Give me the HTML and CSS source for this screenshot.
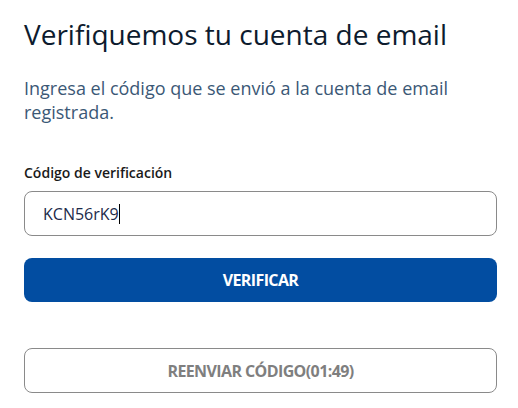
FILE: index.html
```html
<!DOCTYPE html>
<html lang="es">
<head>
<meta charset="UTF-8">
<meta name="viewport" content="width=device-width, initial-scale=1.0">
<title>Verificar email</title>
<link rel="stylesheet" href="styles.css">
</head>
<body>

<div class="verify">
  <h1 class="verify-title">Verifiquemos tu cuenta de email</h1>
  <p class="verify-text">Ingresa el código que se envió a la cuenta de email registrada.</p>

  <form id="verifyForm" class="verify-form">
    <div class="form-group">
      <label for="code">Código de verificación</label>
      <div class="code-input">KCN56rK9<span class="caret"></span></div>
    </div>
    <button type="submit" class="btn-primary">VERIFICAR</button>
    <button type="button" class="btn-outline">REENVIAR CÓDIGO(01:49)</button>
  </form>
</div>

</body>
</html>
```

FILE: styles.css
```css
/* CSS styles */
body, html {
  margin: 0;
  background-color: #ffffff;
  font-family: "Open Sans", "Noto Sans", sans-serif;
}

.verify {
  padding: 15px 21px 0 24px;
}

.verify-title {
  margin: 0;
  font-size: 28px;
  font-weight: 400;
  line-height: 38px;
  color: #0d1b2e;
}

.verify-text {
  margin: 23px 0 0;
  font-size: 18px;
  line-height: 24px;
  color: #3b5876;
}

.verify-form {
  margin-top: 39px;
}

.form-group {
  margin-bottom: 22px;
}

label {
  display: block;
  margin-bottom: 9px;
  font-size: 14px;
  font-weight: 600;
  color: #1a1a1a;
}

.code-input {
  display: flex;
  align-items: center;
  height: 43px;
  padding: 0 18px;
  border: 1px solid #8a8a8a;
  border-radius: 8px;
  font-size: 16px;
  color: #1c2a4a;
}

.caret {
  display: inline-block;
  width: 1px;
  height: 20px;
  background-color: #000000;
}

button {
  display: block;
  width: 100%;
  height: 44px;
  border-radius: 8px;
  font-family: "Open Sans", sans-serif;
  font-size: 16px;
  font-weight: 700;
  letter-spacing: -0.6px;
  cursor: pointer;
}

.btn-primary {
  background-color: #024da1;
  color: #ffffff;
  border: none;
}

.btn-outline {
  margin-top: 46px;
  height: 45px;
  background-color: #ffffff;
  color: #7f7f7f;
  border: 1px solid #8a8a8a;
}
```
